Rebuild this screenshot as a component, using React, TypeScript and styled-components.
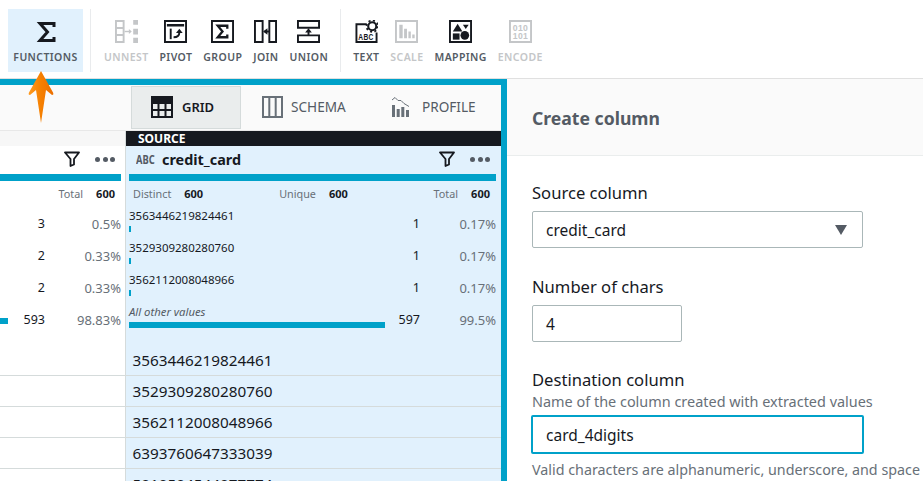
import React from "react";
import styled, { createGlobalStyle } from "styled-components";

const GlobalStyle = createGlobalStyle`
    html, body {
        margin: 0;
        padding: 0;
        height: 481px;
        overflow: hidden;
        background: white;
        font-family: "Noto Sans", "Open Sans", sans-serif;
    }
`;

const TEAL = "#00a1c9";
const INK = "#16191f";
const GREY = "#545b64";
const MUTED = "#687078";
const DISABLED = "#c4c6c8";
const BLUE = "#e1f1fd";
const LINE = "#d5dbdb";

const Page = styled.div`
    position: relative;
    width: 923px;
    height: 481px;
    overflow: hidden;
    display: flex;
    flex-direction: column;
`;

const Toolbar = styled.div`
    height: 69px;
    flex: none;
    display: flex;
    align-items: flex-start;
    padding-top: 9px;
    border-bottom: 1px solid #e0e0e0;
`;

const FunctionsButton = styled.div`
    width: 75px;
    height: 63px;
    margin-left: 8px;
    background: ${BLUE};
    display: flex;
    flex-direction: column;
    align-items: center;
`;

const Divider = styled.div<{ $left: number; $right: number }>`
    width: 1px;
    height: 63px;
    background: #e9ebed;
    margin: 0 ${(p) => p.$right}px 0 ${(p) => p.$left}px;
`;

const ToolGroup = styled.div`
    display: flex;
    gap: 11px;
    height: 63px;
`;

const Tool = styled.div<{ $off?: boolean }>`
    display: flex;
    flex-direction: column;
    align-items: center;
    padding-top: 11px;
    font-size: 10.5px;
    font-weight: 600;
    letter-spacing: 0.4px;
    color: ${(p) => (p.$off ? DISABLED : GREY)};
    svg {
        display: block;
        height: 23px;
        width: 23px;
        margin-bottom: 7px;
    }
`;

const FunctionsLabel = styled.span`
    font-size: 10.5px;
    font-weight: 600;
    letter-spacing: 0.4px;
    color: ${GREY};
    margin-top: 7px;
`;

const SigmaGlyph = styled.svg`
    width: 20px;
    height: 22px;
    margin-top: 12px;
    display: block;
`;

const Body = styled.div`
    flex: 1;
    display: flex;
    min-height: 0;
`;

const Workspace = styled.div`
    width: 507px;
    flex: none;
    box-sizing: border-box;
    border-top: 6px solid ${TEAL};
    border-right: 6px solid ${TEAL};
    display: flex;
    flex-direction: column;
`;

const TabBar = styled.div`
    height: 46px;
    flex: none;
    background: #fafafa;
    display: flex;
    box-sizing: border-box;
    padding: 1px 0 0 131px;
    border-bottom: 1px solid #e8e8e8;
`;

const Tab = styled.div<{ $active?: boolean; $w: number; $gap: number }>`
    width: ${(p) => p.$w}px;
    height: 43px;
    box-sizing: border-box;
    display: flex;
    align-items: center;
    gap: ${(p) => p.$gap}px;
    padding: 0 0 2px ${(p) => (p.$active ? 19 : 21)}px;
    font-size: ${(p) => (p.$active ? 13 : 13.6)}px;
    font-weight: ${(p) => (p.$active ? 600 : 400)};
    color: ${(p) => (p.$active ? INK : GREY)};
    background: ${(p) => (p.$active ? "#eaeded" : "transparent")};
    border: ${(p) => (p.$active ? "1px solid #d5dbdb" : "none")};
`;

const Table = styled.div`
    flex: 1;
    display: grid;
    grid-template-columns: 125px 1fr;
    min-height: 0;
    overflow: hidden;
`;

const Column = styled.div<{ $selected?: boolean }>`
    background: ${(p) => (p.$selected ? BLUE : "white")};
    border-left: ${(p) => (p.$selected ? `1px solid ${LINE}` : "none")};
    display: flex;
    flex-direction: column;
    min-width: 0;
`;

const SourceBand = styled.div<{ $hidden?: boolean }>`
    height: 15px;
    flex: none;
    background: ${(p) => (p.$hidden ? "#f7f7f7" : INK)};
    color: white;
    font-size: 12px;
    font-weight: 700;
    line-height: 15px;
    padding-left: 12px;
`;

const ColumnHead = styled.div<{ $right: number }>`
    height: 28px;
    flex: none;
    display: flex;
    align-items: center;
    padding: 0 ${(p) => p.$right}px 2px 10px;
    box-sizing: border-box;
    gap: 6px;
`;

const ColumnName = styled.span`
    font-size: 14.4px;
    font-weight: 700;
    color: ${INK};
    flex: 1;
`;

const TypeTag = styled.span`
    font-size: 13px;
    font-weight: 700;
    color: ${GREY};
    width: 20px;
    transform: scaleX(0.72);
    transform-origin: left center;
`;

const Dots = styled.span`
    display: flex;
    gap: 2.5px;
    margin-left: 9px;
    i {
        width: 5px;
        height: 5px;
        border-radius: 50%;
        background: ${GREY};
    }
`;

const ColumnBar = styled.div<{ $left: number; $right: number }>`
    height: 7px;
    flex: none;
    background: ${TEAL};
    margin: 0 ${(p) => p.$right}px 0 ${(p) => p.$left}px;
`;

const StatsRow = styled.div<{ $left: number; $right: number }>`
    height: 25px;
    flex: none;
    display: flex;
    align-items: center;
    font-size: 10.8px;
    padding: 0 ${(p) => p.$right}px 0 ${(p) => p.$left}px;
    color: ${MUTED};
    b {
        color: ${INK};
        font-size: 11px;
        font-weight: 700;
        margin-left: 13px;
    }
`;

const StatGap = styled.span`
    width: 76px;
    flex: none;
`;

const Spacer = styled.span`
    flex: 1;
`;

const Profile = styled.div<{ $count: number; $left: number; $right: number }>`
    height: 32px;
    flex: none;
    display: grid;
    grid-template-columns: 1fr ${(p) => p.$count}px 76px;
    padding: 3px ${(p) => p.$right}px 0 ${(p) => p.$left}px;
    box-sizing: border-box;
    align-items: center;
`;

const ProfileValue = styled.div`
    align-self: start;
    font-size: 11.5px;
    line-height: 14px;
    color: ${INK};
    white-space: nowrap;
`;

const OtherValue = styled(ProfileValue)`
    font-size: 11.3px;
    font-style: italic;
    color: ${GREY};
`;

const MiniBar = styled.div<{ $tick?: boolean }>`
    height: 6px;
    width: ${(p) => (p.$tick ? "1.5px" : "auto")};
    margin-top: 3px;
    background: ${TEAL};
`;

const Count = styled.div`
    font-size: 12.5px;
    color: ${INK};
    text-align: right;
`;

const Percent = styled.div`
    font-size: 13px;
    color: ${MUTED};
    text-align: right;
`;

const Gap = styled.div`
    height: 11px;
    flex: none;
`;

const DataRow = styled.div`
    height: 31px;
    flex: none;
    box-sizing: border-box;
    border-bottom: 1px solid ${LINE};
    font-size: 15.3px;
    line-height: 31px;
    padding-left: 6.5px;
    color: ${INK};
`;

const Side = styled.div`
    flex: 1;
    display: flex;
    flex-direction: column;
    min-width: 0;
`;

const SideHead = styled.div`
    height: 77px;
    flex: none;
    box-sizing: border-box;
    background: #fafafa;
    border-bottom: 1px solid #eaeded;
    padding: 2px 0 0 25px;
    display: flex;
    align-items: center;
    font-size: 17.6px;
    font-weight: 700;
    color: ${GREY};
`;

const Form = styled.div`
    padding: 26px 0 0 25px;
    display: flex;
    flex-direction: column;
`;

const Label = styled.div`
    font-size: 16.6px;
    line-height: 22px;
    color: ${INK};
`;

const Hint = styled.div<{ $top: number; $size: number }>`
    font-size: ${(p) => p.$size}px;
    line-height: 19px;
    margin-top: ${(p) => p.$top}px;
    color: ${MUTED};
    white-space: nowrap;
`;

const Field = styled.div<{ $w: number }>`
    width: ${(p) => p.$w}px;
    height: 37px;
    box-sizing: border-box;
    border: 1px solid #aab7b8;
    border-radius: 2px;
    font-size: 15.5px;
    color: ${INK};
    display: flex;
    align-items: center;
    justify-content: space-between;
    padding: 0 15px 0 13px;
    margin-top: 7px;
`;

const FocusField = styled(Field)`
    height: 39px;
    border: 2px solid ${TEAL};
    margin: 4px 0 0 -1px;
`;

const Caret = styled.span`
    width: 0;
    height: 0;
    border-left: 6.5px solid transparent;
    border-right: 6.5px solid transparent;
    border-top: 10px solid ${GREY};
`;

const Stack = styled.div<{ $top: number }>`
    margin-top: ${(p) => p.$top}px;
`;

const ArrowMark = styled.svg`
    position: absolute;
    left: 28px;
    top: 70px;
    width: 26px;
    height: 54px;
`;

const Stroke = { fill: "none", stroke: "currentColor", strokeWidth: 2 };

const Filter = () => (
    <svg width="16" height="16" viewBox="0 0 16 16" style={{ flex: "none" }}>
        <path d="M1 1.500h14L10 8v5.500L6.500 15V8z" fill="none" stroke={INK} strokeWidth="1.800" strokeLinejoin="round" />
    </svg>
);

const ColumnActions = () => (
    <>
        <Filter />
        <Dots>
            <i />
            <i />
            <i />
        </Dots>
    </>
);

const profiles = [
    { value: "3563446219824461", count: "1", pct: "0.17%" },
    { value: "3529309280280760", count: "1", pct: "0.17%" },
    { value: "3562112008048966", count: "1", pct: "0.17%" },
];

const leftProfiles = [
    { count: "3", pct: "0.5%" },
    { count: "2", pct: "0.33%" },
    { count: "2", pct: "0.33%" },
];

const cards = ["3563446219824461", "3529309280280760", "3562112008048966", "6393760647333039", "5010504544077774"];

const App = () => (
    <Page>
        <GlobalStyle />
        <Toolbar>
            <FunctionsButton>
                <SigmaGlyph viewBox="0 0 20 22">
                    <path d="M18 6V2.500H4l7.500 8.500L4 19.500h14V16" fill="none" stroke={INK} strokeWidth="3" />
                </SigmaGlyph>
                <FunctionsLabel>FUNCTIONS</FunctionsLabel>
            </FunctionsButton>
            <Divider $left={7} $right={13} />
            <ToolGroup>
                <Tool $off>
                    <svg viewBox="0 0 24 24" color={DISABLED}>
                        <path d="M1 1h8v22H1zM1 8.300h8M1 15.700h8" {...Stroke} />
                        <path d="M10 12h5" {...Stroke} strokeWidth={1.500} />
                        <path d="M14.500 9.500l3 2.500-3 2.500z" fill="currentColor" />
                        <path d="M19 0h5v5h-5zM19 9h5v6h-5zM19 18.500h5v5.500h-5z" fill="currentColor" />
                    </svg>
                    UNNEST
                </Tool>
                <Tool>
                    <svg viewBox="0 0 24 24" color={INK}>
                        <path d="M1 1h22v22H1z" {...Stroke} />
                        <path d="M3 5.500h18" {...Stroke} strokeWidth={2.600} />
                        <path d="M7 9v11" {...Stroke} />
                        <path d="M10 18c4 0 6-1.500 6-5" {...Stroke} />
                        <path d="M12.500 13.500h7L16 9z" fill="currentColor" />
                    </svg>
                    PIVOT
                </Tool>
                <Tool>
                    <svg viewBox="0 0 24 24" color={INK}>
                        <path d="M1 1h22v22H1z" {...Stroke} />
                        <path d="M17 9V6H7l5 6-5 6h10v-3" fill="none" stroke="currentColor" strokeWidth="2.400" />
                    </svg>
                    GROUP
                </Tool>
                <Tool>
                    <svg viewBox="0 0 24 24" color={INK}>
                        <path d="M1 1h8v22H1zM16 1h7v22h-7z" {...Stroke} />
                        <path d="M11 12h5" {...Stroke} />
                        <path d="M9.500 12l4.500-3.500v7z" fill="currentColor" />
                    </svg>
                    JOIN
                </Tool>
                <Tool>
                    <svg viewBox="0 0 24 24" color={INK}>
                        <path d="M1 1h22v7H1zM1 16h22v7H1z" {...Stroke} />
                        <path d="M12 16v-4" {...Stroke} />
                        <path d="M12 8.500l-3.500 4.500h7z" fill="currentColor" />
                    </svg>
                    UNION
                </Tool>
            </ToolGroup>
            <Divider $left={12} $right={12} />
            <ToolGroup>
                <Tool>
                    <svg viewBox="0 0 24 24" color={INK}>
                        <path d="M12 4.500H1.500v18.500h21V13" {...Stroke} />
                        <circle cx="18" cy="6.500" r="4.200" {...Stroke} strokeWidth={2.200} />
                        <circle cx="18" cy="6.500" r="6" fill="none" stroke="currentColor" strokeWidth="1.800" strokeDasharray="2.200 2.500" />
                        <text x="3.500" y="20.500" fontSize="9" fontWeight="700" fill="currentColor" fontFamily="Liberation Sans" textLength="16" lengthAdjust="spacingAndGlyphs">
                            ABC
                        </text>
                    </svg>
                    TEXT
                </Tool>
                <Tool $off>
                    <svg viewBox="0 0 24 24" color={DISABLED}>
                        <path d="M1 1h22v22H1z" {...Stroke} />
                        <path d="M4.500 5h3.500v14H4.500zM9.500 9h3v10h-3zM14 12h2.500v7H14zM18 15h2.500v4H18z" fill="currentColor" />
                    </svg>
                    SCALE
                </Tool>
                <Tool>
                    <svg viewBox="0 0 24 24" color={INK}>
                        <path d="M1 1h22v22H1z" {...Stroke} />
                        <path d="M9 4l5 8H4z" fill="currentColor" />
                        <path d="M14.500 5h6l-3 4.500z" fill="currentColor" />
                        <path d="M4 14h7v6.500H4z" fill="currentColor" />
                        <circle cx="16.500" cy="16" r="4.500" fill="currentColor" />
                    </svg>
                    MAPPING
                </Tool>
                <Tool $off>
                    <svg viewBox="0 0 24 24" color={DISABLED}>
                        <path d="M1 1h22v22H1z" {...Stroke} />
                        <text x="12" y="11" fontSize="9" fontWeight="700" textAnchor="middle" fill="currentColor" fontFamily="Liberation Sans">
                            010
                        </text>
                        <text x="12" y="20" fontSize="9" fontWeight="700" textAnchor="middle" fill="currentColor" fontFamily="Liberation Sans">
                            101
                        </text>
                    </svg>
                    ENCODE
                </Tool>
            </ToolGroup>
        </Toolbar>
        <Body>
            <Workspace>
                <TabBar>
                    <Tab $active $w={110} $gap={9}>
                        <svg width="22" height="22" viewBox="0 0 22 22">
                            <path d="M1 1h20v20H1zM1 7h20M1 14h20M7.500 7v14M14.500 7v14" fill="none" stroke={INK} strokeWidth="2" />
                            <path d="M1 1h20v6H1z" fill={INK} />
                        </svg>
                        GRID
                    </Tab>
                    <Tab $w={130} $gap={8}>
                        <svg width="21" height="22" viewBox="0 0 21 22">
                            <path d="M1 1h19v20H1zM7.300 1v20M13.700 1v20" fill="none" stroke={MUTED} strokeWidth="2" />
                        </svg>
                        SCHEMA
                    </Tab>
                    <Tab $w={118} $gap={13}>
                        <svg width="17" height="20" viewBox="0 0 17 20">
                            <path d="M0 8h3v12H0zM4.700 12h3v8h-3zM9.300 10h3v10h-3zM14 13h3v7h-3z" fill={MUTED} />
                            <path d="M0 3l3-2.500 3 3h3l3 3 5 3" fill="none" stroke={MUTED} strokeWidth="1" />
                        </svg>
                        PROFILE
                    </Tab>
                </TabBar>
                <Table>
                    <Column>
                        <SourceBand $hidden />
                        <ColumnHead $right={10}>
                            <ColumnName />
                            <ColumnActions />
                        </ColumnHead>
                        <ColumnBar $left={0} $right={4} />
                        <StatsRow $left={0} $right={10}>
                            <Spacer />
                            <span>Total</span>
                            <b>600</b>
                        </StatsRow>
                        {leftProfiles.map((row) => (
                            <Profile key={row.pct + row.count} $count={37} $left={0} $right={4}>
                                <span />
                                <Count>{row.count}</Count>
                                <Percent>{row.pct}</Percent>
                            </Profile>
                        ))}
                        <Profile $count={37} $left={0} $right={4}>
                            <MiniBar />
                            <Count>593</Count>
                            <Percent>98.83%</Percent>
                        </Profile>
                        <Gap />
                        {cards.map((card) => (
                            <DataRow key={card} />
                        ))}
                    </Column>
                    <Column $selected>
                        <SourceBand>SOURCE</SourceBand>
                        <ColumnHead $right={11}>
                            <TypeTag>ABC</TypeTag>
                            <ColumnName>credit_card</ColumnName>
                            <ColumnActions />
                        </ColumnHead>
                        <ColumnBar $left={3} $right={5} />
                        <StatsRow $left={7} $right={11}>
                            <span>Distinct</span>
                            <b>600</b>
                            <StatGap />
                            <span>Unique</span>
                            <b>600</b>
                            <Spacer />
                            <span>Total</span>
                            <b>600</b>
                        </StatsRow>
                        {profiles.map((row) => (
                            <Profile key={row.value} $count={35} $left={3} $right={5}>
                                <ProfileValue>
                                    {row.value}
                                    <MiniBar $tick />
                                </ProfileValue>
                                <Count>{row.count}</Count>
                                <Percent>{row.pct}</Percent>
                            </Profile>
                        ))}
                        <Profile $count={35} $left={3} $right={5}>
                            <OtherValue>
                                All other values
                                <MiniBar />
                            </OtherValue>
                            <Count>597</Count>
                            <Percent>99.5%</Percent>
                        </Profile>
                        <Gap />
                        {cards.map((card) => (
                            <DataRow key={card}>{card}</DataRow>
                        ))}
                    </Column>
                </Table>
            </Workspace>
            <Side>
                <SideHead>Create column</SideHead>
                <Form>
                    <Label>Source column</Label>
                    <Field $w={331}>
                        credit_card
                        <Caret />
                    </Field>
                    <Stack $top={28}>
                        <Label>Number of chars</Label>
                        <Field $w={150}>4</Field>
                    </Stack>
                    <Stack $top={27}>
                        <Label>Destination column</Label>
                        <Hint $top={1} $size={14.45}>
                            Name of the column created with extracted values
                        </Hint>
                        <FocusField $w={333}>card_4digits</FocusField>
                        <Hint $top={6} $size={14.3}>
                            Valid characters are alphanumeric, underscore, and space
                        </Hint>
                    </Stack>
                </Form>
            </Side>
        </Body>
        <ArrowMark viewBox="0 0 26 54">
            <defs>
                <linearGradient id="orange" x1="0" x2="1" y1="0" y2="0">
                    <stop offset="0" stopColor="#ff9a1f" />
                    <stop offset="0.5" stopColor="#f57f00" />
                    <stop offset="1" stopColor="#ec6f00" />
                </linearGradient>
            </defs>
            <path d="M13 1L25 22.500Q26 25 24 25L18 20L13 53L8 20L2 25Q0 25 1 22.500Z" fill="url(#orange)" />
        </ArrowMark>
    </Page>
);

export default App;
